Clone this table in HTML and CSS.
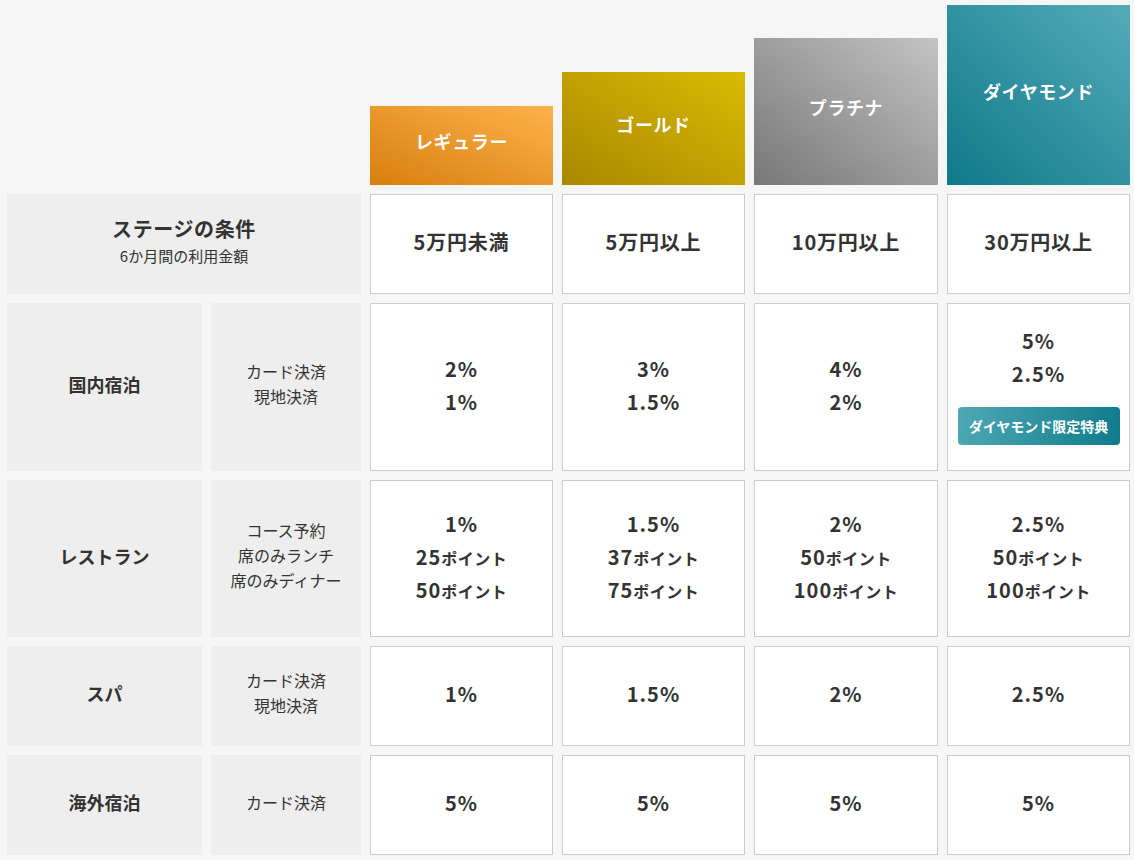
FILE: index.html
```html
<!DOCTYPE html>
<html lang="ja">
<head>
<meta charset="utf-8">
<title>ステージ特典</title>
<link rel="stylesheet" href="styles.css">
</head>
<body>
<div class="stage-table">
  <div class="corner"></div>
  <div class="tier tier-regular">レギュラー</div>
  <div class="tier tier-gold">ゴールド</div>
  <div class="tier tier-platinum">プラチナ</div>
  <div class="tier tier-diamond">ダイヤモンド</div>

  <div class="label label-wide">
    <div class="label-title">ステージの条件</div>
    <div class="label-note">6か月間の利用金額</div>
  </div>
  <div class="cell cond">5万円未満</div>
  <div class="cell cond">5万円以上</div>
  <div class="cell cond">10万円以上</div>
  <div class="cell cond">30万円以上</div>

  <div class="label label-main">国内宿泊</div>
  <div class="label label-sub"><span>カード決済</span><span>現地決済</span></div>
  <div class="cell"><span>2%</span><span>1%</span></div>
  <div class="cell"><span>3%</span><span>1.5%</span></div>
  <div class="cell"><span>4%</span><span>2%</span></div>
  <div class="cell"><span>5%</span><span>2.5%</span><span class="badge">ダイヤモンド限定特典</span></div>

  <div class="label label-main">レストラン</div>
  <div class="label label-sub"><span>コース予約</span><span>席のみランチ</span><span>席のみディナー</span></div>
  <div class="cell"><span>1%</span><span>25<small>ポイント</small></span><span>50<small>ポイント</small></span></div>
  <div class="cell"><span>1.5%</span><span>37<small>ポイント</small></span><span>75<small>ポイント</small></span></div>
  <div class="cell"><span>2%</span><span>50<small>ポイント</small></span><span>100<small>ポイント</small></span></div>
  <div class="cell"><span>2.5%</span><span>50<small>ポイント</small></span><span>100<small>ポイント</small></span></div>

  <div class="label label-main">スパ</div>
  <div class="label label-sub"><span>カード決済</span><span>現地決済</span></div>
  <div class="cell"><span>1%</span></div>
  <div class="cell"><span>1.5%</span></div>
  <div class="cell"><span>2%</span></div>
  <div class="cell"><span>2.5%</span></div>

  <div class="label label-main">海外宿泊</div>
  <div class="label label-sub"><span>カード決済</span></div>
  <div class="cell"><span>5%</span></div>
  <div class="cell"><span>5%</span></div>
  <div class="cell"><span>5%</span></div>
  <div class="cell"><span>5%</span></div>
</div>
</body>
</html>
```

FILE: styles.css
```css
html, body {
  margin: 0;
  padding: 0;
  background: #f6f6f6;
}

body {
  font-family: "Noto Sans CJK JP", "Noto Sans", sans-serif;
  color: #333333;
}

.stage-table {
  display: grid;
  grid-template-columns: 195px 150px 183px 183px 184px 183px;
  grid-template-rows: 180px 100px 168px 157px 100px 100px;
  gap: 9px;
  padding: 5px 4px 5px 7px;
}

.corner {
  grid-column: 1 / 3;
}

.tier {
  box-sizing: border-box;
  align-self: end;
  display: flex;
  align-items: center;
  justify-content: center;
  padding-bottom: 9px;
  color: #ffffff;
  font-weight: bold;
  font-size: 18px;
  letter-spacing: 0.6px;
  text-shadow: 0 0 1px rgba(0, 0, 0, 0.15);
}

.tier-regular {
  height: 79px;
  background: linear-gradient(to top right, #d67f0c, #feb24c);
}

.tier-gold {
  height: 113px;
  background: linear-gradient(to top right, #aa8700, #d9ba03);
}

.tier-platinum {
  height: 147px;
  background: linear-gradient(to top right, #777777, #c3c3c3);
}

.tier-diamond {
  height: 180px;
  background: linear-gradient(to top right, #0e798a, #55abb8);
}

.label {
  box-sizing: border-box;
  background: #eeeeee;
  display: flex;
  flex-direction: column;
  align-items: center;
  justify-content: center;
  text-align: center;
  padding-bottom: 6px;
}

.label-wide {
  grid-column: 1 / 3;
}

.label-title {
  font-size: 20px;
  font-weight: bold;
  line-height: 30px;
  letter-spacing: 0.6px;
}

.label-note {
  font-size: 15px;
  line-height: 24px;
}

.label-main {
  font-size: 18px;
  font-weight: bold;
}

.label-sub {
  font-size: 16px;
  line-height: 25px;
}

.cell {
  box-sizing: border-box;
  background: #ffffff;
  border: 1px solid #cccccc;
  display: flex;
  flex-direction: column;
  align-items: center;
  justify-content: center;
  padding-bottom: 5px;
  font-size: 20px;
  font-weight: bold;
  line-height: 33px;
  letter-spacing: 1px;
}

.cell.cond {
  font-size: 20px;
  letter-spacing: 0.8px;
}

.cell small {
  font-size: 16px;
  line-height: 1;
  letter-spacing: 0.5px;
}

.badge {
  margin-top: 17px;
  width: 162px;
  height: 38px;
  border-radius: 4px;
  background: linear-gradient(100deg, #4fa8b4, #0f7b8b);
  color: #ffffff;
  font-size: 14px;
  line-height: 38px;
  letter-spacing: 0;
  text-align: center;
}
```
